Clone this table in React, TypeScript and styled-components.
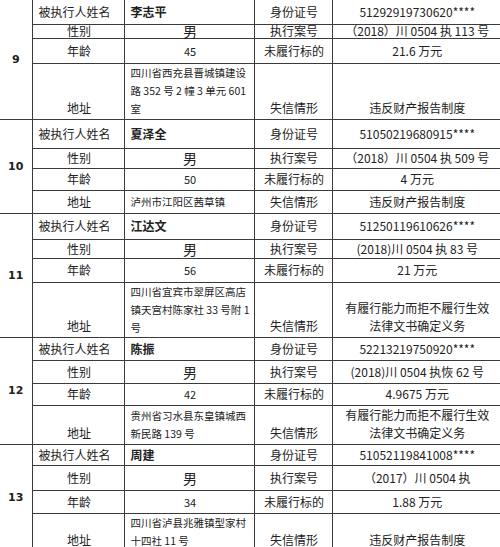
import React from 'react';
import styled, { createGlobalStyle } from 'styled-components';

const Global = createGlobalStyle`
  html, body { margin: 0; padding: 0; background: #fff; overflow: hidden; }
  body { font-family: "Noto Sans CJK SC", "DejaVu Sans", sans-serif; color: #222; }
`;

const Table = styled.table`
  width: 500px;
  table-layout: fixed;
  border-collapse: collapse;
  font-size: 12px;
  tr:first-child td { border-top: none; }
  td:last-child { border-right: none; }
`;

const Row = styled.tr<{ $h: number }>`
  height: ${p => p.$h}px;
`;

const Cell = styled.td<{
  $align?: 'left' | 'center';
  $size?: number;
  $bold?: boolean;
  $tall?: boolean;
  $bottom?: boolean;
}>`
  border: 1px solid #3a3a3a;
  padding: ${p => (p.$bottom ? '0 4px 2px 6px' : '0 4px 0 6px')};
  text-align: ${p => p.$align ?? 'center'};
  vertical-align: ${p => (p.$bottom ? 'bottom' : 'middle')};
  font-size: ${p => p.$size ?? 12}px;
  font-weight: ${p => (p.$bold ? 700 : 400)};
  line-height: ${p => (p.$tall ? 18 : 12)}px;
  white-space: pre;
`;

const NoCell = styled.td`
  border: 1px solid #3a3a3a;
  border-left: none;
  text-align: center;
  vertical-align: middle;
  font-family: "DejaVu Sans", sans-serif;
  font-weight: 700;
  font-size: 11px;
  padding: 0;
`;

type Group = {
  no: string;
  name: string;
  age: string;
  addr: string[];
  id: string;
  caseNo: string;
  amount: string;
  kind: string[];
  h: number[];
};

const groups: Group[] = [
  {
    no: '9', name: '李志平', age: '45',
    addr: ['四川省西充县晋城镇建设', '路 352 号 2 幢 3 单元 601', '室'],
    id: '51292919730620****', caseNo: '（2018）川 0504 执 113 号', amount: '21.6 万元',
    kind: ['违反财产报告制度'], h: [24, 14, 25, 56],
  },
  {
    no: '10', name: '夏泽全', age: '50',
    addr: ['泸州市江阳区茜草镇'],
    id: '51050219680915****', caseNo: '（2018）川 0504 执 509 号', amount: '4 万元',
    kind: ['违反财产报告制度'], h: [29, 20, 22, 23],
  },
  {
    no: '11', name: '江达文', age: '56',
    addr: ['四川省宜宾市翠屏区高店', '镇天宫村陈家社 33 号附 1', '号'],
    id: '51250119610626****', caseNo: '(2018)川 0504 执 83 号', amount: '21 万元',
    kind: ['有履行能力而拒不履行生效', '法律文书确定义务'], h: [26, 19, 24, 54],
  },
  {
    no: '12', name: '陈振', age: '42',
    addr: ['贵州省习水县东皇镇城西', '新民路 139 号'],
    id: '52213219750920****', caseNo: '(2018)川 0504 执恢 62 号', amount: '4.9675 万元',
    kind: ['有履行能力而拒不履行生效', '法律文书确定义务'], h: [23, 23, 22, 37],
  },
  {
    no: '13', name: '周建', age: '34',
    addr: ['四川省泸县兆雅镇型家村', '十四社 11 号'],
    id: '51052119841008****', caseNo: '（2017）川 0504 执', amount: '1.88 万元',
    kind: ['违反财产报告制度'], h: [21, 25, 23, 38],
  },
];

export default function App() {
  return (
    <>
      <Global />
      <Table>
        <colgroup>
          <col style={{ width: 32 }} />
          <col style={{ width: 92 }} />
          <col style={{ width: 130 }} />
          <col style={{ width: 78 }} />
          <col style={{ width: 168 }} />
        </colgroup>
        <tbody>
          {groups.map(g => (
            <React.Fragment key={g.no}>
              <Row $h={g.h[0]}>
                <NoCell rowSpan={4}>{g.no}</NoCell>
                <Cell $align="left">被执行人姓名</Cell>
                <Cell $align="left" $bold>{g.name}</Cell>
                <Cell>身份证号</Cell>
                <Cell>{g.id}</Cell>
              </Row>
              <Row $h={g.h[1]}>
                <Cell>性别</Cell>
                <Cell $size={14}>男</Cell>
                <Cell>执行案号</Cell>
                <Cell>{g.caseNo}</Cell>
              </Row>
              <Row $h={g.h[2]}>
                <Cell>年龄</Cell>
                <Cell $size={11}>{g.age}</Cell>
                <Cell>未履行标的</Cell>
                <Cell>{g.amount}</Cell>
              </Row>
              <Row $h={g.h[3]}>
                <Cell $tall $bottom>地址</Cell>
                <Cell $tall $align="left" $size={10.5}>
                  {g.addr.join('\n')}
                </Cell>
                <Cell $tall $bottom>失信情形</Cell>
                <Cell $tall $bottom>
                  {g.kind.join('\n')}
                </Cell>
              </Row>
            </React.Fragment>
          ))}
        </tbody>
      </Table>
    </>
  );
}
